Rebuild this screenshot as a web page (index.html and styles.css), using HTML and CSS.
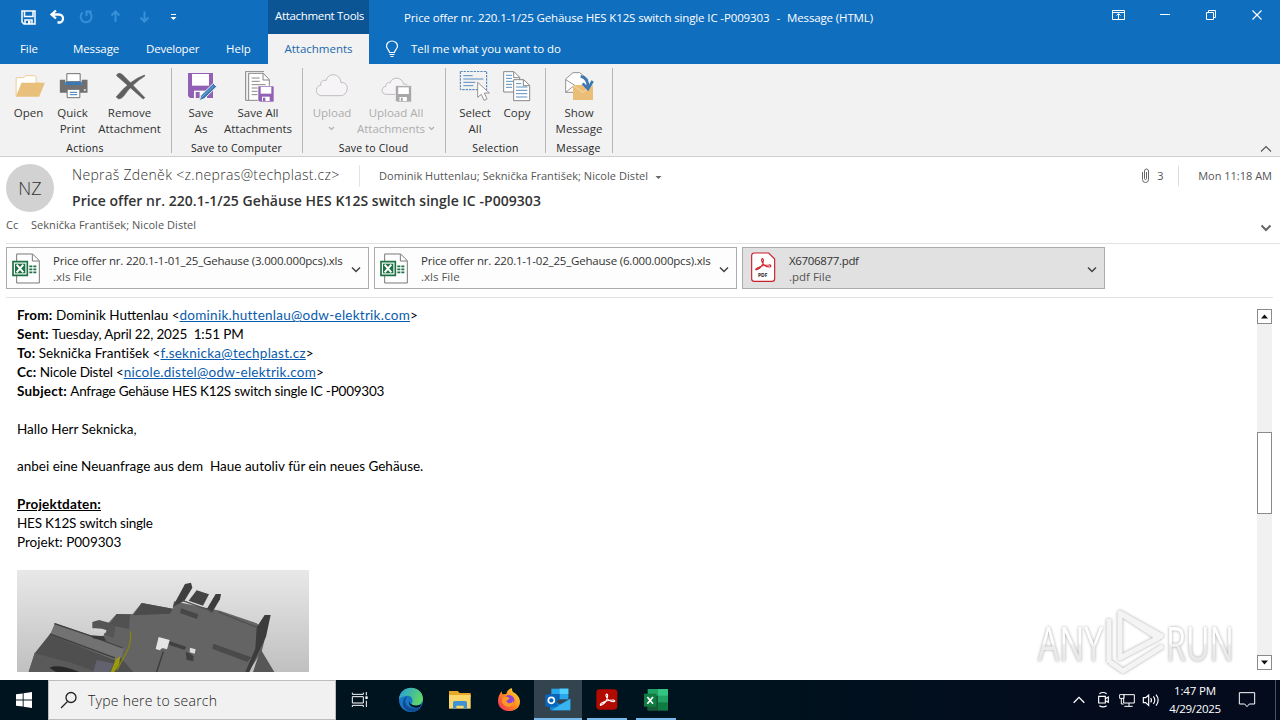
FILE: index.html
```html
<!DOCTYPE html>
<html lang="en">
<head>
<meta charset="utf-8">
<title>Price offer nr. 220.1-1/25 - Message (HTML)</title>
<link rel="stylesheet" href="styles.css">
</head>
<body>
<header class="titlebar">
  <div class="left-head">
    <div class="qat">
      <svg viewBox="0 0 29 34"><path d="M8 11h13v13h-11l-2-2z M10.500 11v5.500h8.500v-5.500 M11 24v-4h7v4" fill="none" stroke="#fff" stroke-width="1.500"/><path d="M14 21h2.500v3h-2.500z" fill="#fff"/></svg>
      <svg viewBox="0 0 29 34"><path d="M13 10.500l-4.500 4 4.500 4M9 14.500h7a4 4 0 0 1 0 8h-1.500" fill="none" stroke="#fff" stroke-width="2.300"/></svg>
      <svg viewBox="0 0 29 34"><path d="M10.500 12.500a5.500 5.500 0 1 0 6.500-.5M14.500 16v-4.500h5" fill="none" stroke="#3590d8" stroke-width="2"/></svg>
      <svg viewBox="0 0 29 34"><path d="M14.500 22v-10M10.500 15.500l4-4 4 4" fill="none" stroke="#3590d8" stroke-width="2"/></svg>
      <svg viewBox="0 0 29 34"><path d="M14.500 11.500v10M10.500 17.500l4 4 4-4" fill="none" stroke="#3590d8" stroke-width="2"/></svg>
      <svg viewBox="0 0 29 34"><path d="M12 14.500h5" stroke="#fff"/><path d="M11.500 17h6l-3 3z" fill="#fff"/></svg>
    </div>
    <nav class="tabs"><span class="t-file">File</span><span class="t-message">Message</span><span class="t-dev">Developer</span><span class="t-help">Help</span></nav>
  </div>
  <div class="context">
    <div class="context-title">Attachment Tools</div>
    <div class="context-tab">Attachments</div>
  </div>
  <div class="right-head">
    <div class="title-row">
      <div class="title"><span>Price offer nr. 220.1-1/25 Gehäuse HES K12S switch single IC -P009303</span><span>-</span><span>Message (HTML)</span></div>
      <div class="winbtns">
        <svg viewBox="0 0 46 30"><path d="M16.500 10.500h12v9h-12zM16.500 12.500h12M22.500 19v-5M20.500 15.500l2-2 2 2" fill="none" stroke="#fff"/></svg>
        <svg viewBox="0 0 46 30"><path d="M18 14.500h10" stroke="#fff"/></svg>
        <svg viewBox="0 0 46 30"><path d="M18.500 12.500h7v7h-7zM20.500 12v-1.500h7v7h-1.500" fill="none" stroke="#fff"/></svg>
        <svg viewBox="0 0 46 30"><path d="M18.500 10.500l9 9M27.500 10.500l-9 9" stroke="#fff" stroke-width="1.200"/></svg>
      </div>
    </div>
    <div class="tell">
      <svg class="bulb" viewBox="0 0 14 18"><path d="M4.500 12.500c0-2.500-3-3.500-3-6.500a5.500 5 0 0 1 11 0c0 3-3 4-3 6.500zM4.500 14.500h5M5.500 16.500h3" fill="none" stroke="#fff" stroke-width="1.200"/></svg>
      <span>Tell me what you want to do</span>
    </div>
  </div>
</header>

<section class="ribbon">
  <div class="group g-actions">
    <div class="buttons">
      <div class="btn b-open"><svg viewBox="37.500 213 96 96"><path d="M47 288V233h22l7-6h27l4 4v18h10" fill="#fff" stroke="#e6b566" stroke-width="2"/><path d="M46 290l17-42h70l-17 42z" fill="#e9bf7c"/></svg><span>Open</span></div>
      <div class="btn b-quick"><svg viewBox="169.500 213 96 96"><path d="M199 221h40v24h-40z" fill="#fff" stroke="#707070" stroke-width="3"/><path d="M178 239h16v16h50v-16h17v39h-83z" fill="#707070"/><path d="M194 245h50v10h-50z" fill="#3c78b4"/><path d="M200 268h38v25h-38z" fill="#fff" stroke="#707070" stroke-width="3"/><path d="M208 277h22M208 284h22" stroke="#3c78b4" stroke-width="3"/><path d="M250 268h6v4h-6z" fill="#fff"/></svg><span>Quick<br>Print</span></div>
      <div class="btn b-remove"><svg viewBox="340.500 213 96 96"><path d="M349 224q6-8 17 0 32 32 67 69l-5 4q-38-34-75-66-6-3-4-7z" fill="#606060" stroke="#606060" stroke-width="2"/><path d="M432 225q-45 16-85 66l8 6q8-1 14-8 24-36 64-61z" fill="#606060" stroke="#606060" stroke-width="2"/></svg><span>Remove<br>Attachment</span></div>
    </div>
    <div class="gname">Actions</div>
  </div>
  <div class="group g-save">
    <div class="buttons">
      <div class="btn b-saveas"><svg viewBox="555 213 96 96"><path d="M564 219h75v75h-69l-6-6z" fill="#9261b5"/><path d="M576 222h51v35h-51z" fill="#fff"/><path d="M582 272h39v22h-39z" fill="#fff"/><path d="M587 276h12v18h-12z" fill="#9261b5"/><path d="M598 302l5-16 37-36 10 10-37 36z" fill="#3c78b4" stroke="#f2f2f2" stroke-width="3"/><path d="M605 292l36-34" stroke="#9fc3e3" stroke-width="2"/></svg><span>Save<br>As</span></div>
      <div class="btn b-saveall"><svg viewBox="726 213 96 96"><path d="M746 301h-9V214h55" fill="none" stroke="#707070" stroke-width="2.500"/><path d="M746 220h44l18 19v62h-62z" fill="#fff" stroke="#707070" stroke-width="2.500"/><path d="M789 221v19h18" fill="none" stroke="#707070" stroke-width="2.500"/><path d="M755 234h24M755 244h24M755 254h42M755 264h18M755 274h18M755 284h18" stroke="#707070" stroke-width="2.500"/><path d="M774 258h48v48h-43l-5-5z" fill="#9261b5" stroke="#f2f2f2" stroke-width="2"/><path d="M782 261h32v20h-32z" fill="#fff"/><path d="M786 290h23v13h-23z" fill="#fff"/><path d="M789 293h7v10h-7z" fill="#9261b5"/></svg><span>Save All<br>Attachments</span></div>
    </div>
    <div class="gname">Save to Computer</div>
  </div>
  <div class="group g-cloud disabled">
    <div class="buttons">
      <div class="btn b-upload"><svg viewBox="48 213 96 96"><path d="M65 287c-21-1-21-28-3-31-1-12 9-18 16-14 7-27 43-22 45 6 26-4 24 37 0 39z" fill="#f6f4f6" stroke="#c0bcc0" stroke-width="3"/></svg><span>Upload<br><svg class="caret" viewBox="0 0 7 5"><path d="M1 1l2.500 2.500L6 1" fill="none" stroke="#b0b0b0" stroke-width="1.200"/></svg></span></div>
      <div class="btn b-upall"><svg viewBox="241.500 213 96 96"><path d="M260 283c-17-1-16-22-1-24 0-9 7-13 12-10 8-22 37-18 41 3 12-1 16 7 15 18l-38 13z" fill="#f6f4f6" stroke="#c0bcc0" stroke-width="3"/><path d="M288 257h48v49h-43l-5-5z" fill="#a8a8a8" stroke="#f2f2f2" stroke-width="2"/><path d="M296 262h32v20h-32z" fill="#fff"/><path d="M300 291h22v12h-22z" fill="#fff"/><path d="M304 293h6v10h-6z" fill="#a8a8a8"/></svg><span>Upload All<br>Attachments <svg class="caret" viewBox="0 0 7 5"><path d="M1 1l2.500 2.500L6 1" fill="none" stroke="#b0b0b0" stroke-width="1.200"/></svg></span></div>
    </div>
    <div class="gname">Save to Cloud</div>
  </div>
  <div class="group g-select">
    <div class="buttons">
      <div class="btn b-select"><svg viewBox="477 213 96 96"><path d="M481 214h79v55h-79z" fill="none" stroke="#3c78b4" stroke-width="3" stroke-dasharray="7 3"/><path d="M490 227h28M490 237h60M490 247h36M490 257h30" stroke="#3c78b4" stroke-width="2.500"/><path d="M533 247v45l11-9 8 18 9-4-8-18h15z" fill="#fff" stroke="#808080" stroke-width="2.500"/></svg><span>Select<br>All</span></div>
      <div class="btn b-copy"><svg viewBox="603 213 96 96"><path d="M611 215h31l17 17v44h-48z" fill="#fff" stroke="#707070" stroke-width="2.500"/><path d="M618 226h18M618 235h18M618 244h22M618 253h18M618 262h18" stroke="#3c78b4" stroke-width="2.500"/><path d="M641 239h30l18 17v46h-48z" fill="#fff" stroke="#707070" stroke-width="2.500"/><path d="M670 240v17h18M641 216v17h17" fill="none" stroke="#707070" stroke-width="2.500"/><path d="M648 251h16M648 261h34M648 271h34M648 281h34M648 291h34" stroke="#3c78b4" stroke-width="2.500"/></svg><span>Copy</span></div>
    </div>
    <div class="gname">Selection</div>
  </div>
  <div class="group g-show">
    <div class="buttons">
      <div class="btn b-show"><svg viewBox="789 213 96 96"><path d="M797 277v-40l22-19h20l24 19v40z" fill="#fff" stroke="#808080" stroke-width="2.500"/><path d="M797 239l29 18M797 277l25-20" fill="none" stroke="#808080" stroke-width="2.500"/><path d="M819 255h60v45h-60z" fill="#ebbe78"/><path d="M819 256l30 21 30-21" fill="none" stroke="#f6dfba" stroke-width="2.500"/><path d="M842 229q22 4 22 34M848 250l16 17 14-24" fill="none" stroke="#3c78b4" stroke-width="8"/></svg><span>Show<br>Message</span></div>
    </div>
    <div class="gname">Message</div>
  </div>
  <svg class="collapse" viewBox="0 0 12 8"><path d="M1 6.500l5-5 5 5" fill="none" stroke="#555" stroke-width="1.100"/></svg>
</section>

<section class="msghead">
  <div class="avatar">NZ</div>
  <div class="lines">
    <div class="line1">
      <span class="sender">Nepraš Zdeněk &lt;z.nepras@techplast.cz&gt;</span>
      <span class="recips">Dominik Huttenlau; Seknička František; Nicole Distel</span>
      <svg class="tri" viewBox="0 0 7 5"><path d="M.5 1h6l-3 3z" fill="#666"/></svg>
      <span class="clipbox"><svg class="clip" viewBox="0 0 9 16"><path d="M1.500 4v7.500a3 3 0 0 0 6 0V3a2 2 0 0 0-4 0v7.500a1 1 0 0 0 2 0V4" fill="none" stroke="#666"/></svg>3</span>
      <span class="date">Mon 11:18 AM</span>
    </div>
    <div class="subject">Price offer nr. 220.1-1/25 Gehäuse HES K12S switch single IC -P009303</div>
  </div>
</section>
<div class="ccrow"><span class="cclabel">Cc</span><span class="ccnames">Seknička František; Nicole Distel</span><svg class="expand" viewBox="0 0 12 8"><path d="M1.500 1.500L6 6l4.500-4.500" fill="none" stroke="#666" stroke-width="2"/></svg></div>

<section class="attachments">
  <div class="att">
    <svg class="ficon" viewBox="32 290 88 96"><path d="M49 296h48l20 20v67H49z" fill="#fff" stroke="#777" stroke-width="3"/><path d="M96 297v20h20" fill="none" stroke="#777" stroke-width="3"/><path d="M38 319h43v41H38z" fill="#fff" stroke="#1e7145" stroke-width="5"/><path d="M44 325h31v29H44z" fill="#1e7145"/><path d="M49 328l20 23M69 328l-20 23" stroke="#fff" stroke-width="6"/><path d="M87 333h9M99 333h9M87 342h9M99 342h9M87 351h9M99 351h9" stroke="#1e7145" stroke-width="5"/></svg>
    <div class="fname"><b class="xls">Price offer nr. 220.1-1-01_25_Gehause (3.000.000pcs).xls</b><span>.xls File</span></div>
    <svg class="chev" viewBox="0 0 10 7"><path d="M1 1.500l4 4 4-4" fill="none" stroke="#444" stroke-width="1.500"/></svg>
  </div>
  <div class="att">
    <svg class="ficon" viewBox="32 290 88 96"><path d="M49 296h48l20 20v67H49z" fill="#fff" stroke="#777" stroke-width="3"/><path d="M96 297v20h20" fill="none" stroke="#777" stroke-width="3"/><path d="M38 319h43v41H38z" fill="#fff" stroke="#1e7145" stroke-width="5"/><path d="M44 325h31v29H44z" fill="#1e7145"/><path d="M49 328l20 23M69 328l-20 23" stroke="#fff" stroke-width="6"/><path d="M87 333h9M99 333h9M87 342h9M99 342h9M87 351h9M99 351h9" stroke="#1e7145" stroke-width="5"/></svg>
    <div class="fname"><b class="xls">Price offer nr. 220.1-1-02_25_Gehause (6.000.000pcs).xls</b><span>.xls File</span></div>
    <svg class="chev" viewBox="0 0 10 7"><path d="M1 1.500l4 4 4-4" fill="none" stroke="#444" stroke-width="1.500"/></svg>
  </div>
  <div class="att selected">
    <svg class="ficon" viewBox="50 37 88 96"><path d="M72 40h43l18 18v59a8 8 0 0 1-8 8H72a8 8 0 0 1-8-8V48a8 8 0 0 1 8-8z" fill="#fff" stroke="#c8202c" stroke-width="3.500"/><path d="M79 90c12-4 19-16 20-27 1-8-6-8-5 0 2 11 12 19 24 19 6-1 4-7-3-6-12 0-23 3-34 9-6 4-6 6-2 5z" fill="none" stroke="#d22630" stroke-width="3.500"/><text x="83" y="112" class="pdf">PDF</text></svg>
    <div class="fname"><b class="x67">X6706877.pdf</b><span>.pdf File</span></div>
    <svg class="chev" viewBox="0 0 10 7"><path d="M1 1.500l4 4 4-4" fill="none" stroke="#444" stroke-width="1.500"/></svg>
  </div>
</section>

<main class="body">
  <div class="mail">
    <p><b>From:</b> <span class="s-dom">Dominik Huttenlau &lt;</span><a class="mailto">dominik.huttenlau@odw-elektrik.com</a>&gt;</p>
    <p><b>Sent:</b> <span class="s-tue">Tuesday, April 22, 2025&nbsp; 1:51 PM</span></p>
    <p><b>To:</b> <span class="s-sek">Seknička František &lt;</span><a class="mailto">f.seknicka@techplast.cz</a>&gt;</p>
    <p><b>Cc:</b> <span class="s-nic">Nicole Distel &lt;</span><a class="mailto">nicole.distel@odw-elektrik.com</a>&gt;</p>
    <p><b>Subject:</b> <span class="s-anf">Anfrage Gehäuse HES K12S switch single IC -P009303</span></p>
    <p>&nbsp;</p>
    <p>Hallo Herr Seknicka,</p>
    <p>&nbsp;</p>
    <p class="s-anbei">anbei eine Neuanfrage aus dem&nbsp; Haue autoliv für ein neues Gehäuse.</p>
    <p>&nbsp;</p>
    <p><b class="under">Projektdaten:</b></p>
    <p class="s-hes">HES K12S switch single</p>
    <p class="s-proj">Projekt: P009303</p>
    <svg class="part" viewBox="51 30 876 306">
      <defs><linearGradient id="bg" x1="0" y1="0" x2="0" y2="1"><stop offset="0" stop-color="#e8e8e8"/><stop offset="1" stop-color="#c0c0c0"/></linearGradient></defs>
      <path d="M51 30h876v306H51z" fill="url(#bg)"/>
      <path d="M200 336L275 240 315 225 322 192 350 162 398 162 425 129 518 146 522 124 660 152 770 190 800 215 785 275 745 336z" fill="#646464"/>
      <path d="M86 336L104 280 150 222 360 290 400 336z" fill="#4f4f4f"/>
      <path d="M165 189L372 262 365 292 345 300 150 224z" fill="#727272"/>
      <path d="M315 200L392 210 388 270 310 240z" fill="#626262"/>
      <path d="M163 191l105 35 100 38M150 222l195 72" fill="none" stroke="#414141" stroke-width="4"/>
      <path d="M104 280l110 28 76 28H86z" fill="#5a5a5a"/>
      <path d="M148 323q30-12 90 13h-70z" fill="#292929"/>
      <path d="M290 300l50 10-10 26h-50z" fill="#62626e"/>
      <path d="M277 186l20-6 36 10 14 4-6 40-26-10 2-12-40-8z" fill="#555"/><path d="M284 205l22 1 14 5-4 9-32-6z" fill="#d4d4d4"/>
      <path d="M274 226l37 3 8 14-40-8z" fill="#3a3a3a"/>
      <path d="M328 194l22-32 40 2-3 44z" fill="#515151"/>
      <path d="M425 129l93 17-8 15-110 5z" fill="#4b4b4b"/>
      <path d="M518 140l37-68 18-4 4 15-24 40z" fill="#3f3f3f"/><path d="M566 122l24-31 37 12-18 34z" fill="#444"/><path d="M620 148l27-46h16l-3 16-24 40z" fill="#3d3d3d"/>
      <path d="M770 202l24-37h18l-14 65-50 106h-12l30-70z" fill="#3c3c3c"/>
      <path d="M782 268l41 68h-64z" fill="#575757"/>
      <path d="M655 156l116 46M548 122l90 32" stroke="#505050" stroke-width="4"/>
      <path d="M543 145l52 18-4 14-51-18z" fill="#474747"/>
      <path d="M640 251l114 41-12 14-105-40z" fill="#4a4a4a"/>
      <path d="M476 231l33 9-8 28-14-4-8 7-12-4z" fill="#e4e4e4"/><path d="M570 263l17 5-3 13-15-4z" fill="#dedede"/>
      <path d="M510 244l48 16-4 10-48-16zM557 276l12 4 12 9-1 15-20-5z" fill="#404040"/>
      <path d="M490 274l-20 62" stroke="#3a3a3a" stroke-width="4"/>
      <path d="M391 214q6 38-20 78l-20 38" fill="none" stroke="#858612" stroke-width="4"/><path d="M332 336l15-38 14-9-4 25-14 22z" fill="#9a9a10"/>
    </svg>
  </div>
  <div class="scroll">
    <div class="sbtn"><svg viewBox="0 0 7 5"><path d="M0 4.500h7L3.500 .5z" fill="#111"/></svg></div>
    <div class="track"><div class="thumb"></div></div>
    <div class="sbtn"><svg viewBox="0 0 7 5"><path d="M0 .5h7L3.500 4.500z" fill="#111"/></svg></div>
  </div>
  <svg class="watermark" viewBox="0 0 216 72">
    <defs><linearGradient id="wm" x1="0" y1="0" x2="0" y2="1"><stop offset=".5" stop-color="#fff"/><stop offset=".55" stop-color="#ededed"/><stop offset="1" stop-color="#e3e3e3"/></linearGradient></defs>
    <text x="8" y="57" textLength="65" lengthAdjust="spacingAndGlyphs" fill="url(#wm)">ANY</text>
    <text x="136" y="57" textLength="68" lengthAdjust="spacingAndGlyphs" fill="url(#wm)">RUN</text>
    <path d="M79 15v44M90 9v45l38-20z M90 9l43 24M80 58l13 9 40-25" fill="none" stroke="#f4f4f4" stroke-width="5" stroke-linejoin="round"/>
  </svg>
</main>

<footer class="taskbar">
  <div class="start"><svg viewBox="0 0 16 16"><path d="M0 2.300L6.700 1.400V7.500H0zM7.600 1.300L16 0v7.500H7.600zM0 8.500h6.700v6.100L0 13.700zM7.600 8.500H16V16l-8.400-1.300z" fill="#fff"/></svg></div>
  <div class="search"><svg viewBox="0 0 18 18"><circle cx="11" cy="6.500" r="5" fill="none" stroke="#222" stroke-width="1.300"/><path d="M7.500 10.500L1 17" stroke="#222" stroke-width="1.300"/></svg><span>Type here to search</span></div>
  <div class="app taskview"><svg viewBox="78 33 84 84"><path d="M97 53v5h33v-5M97 96v-5h33v5M97 65h33v19H97zM139 51v10M139 77v19" fill="none" stroke="#fff" stroke-width="3"/><path d="M136 64h7v8h-7z" fill="#fff"/></svg></div>
  <div class="app"><svg viewBox="231 33 84 84"><defs><linearGradient id="eg" x1="0" y1="0" x2="1" y2=".4"><stop offset="0" stop-color="#249be0"/><stop offset="1" stop-color="#5fd668"/></linearGradient></defs><circle cx="273" cy="75" r="36" fill="#1877c6"/><path d="M237 73c2-46 69-46 72-3 0 20-23 27-35 18 10-15-2-28-15-25-11 2-20 5-22 10z" fill="url(#eg)"/><path d="M262 64c-16 20 1 44 40 34-12 17-36 15-46 5-14-14-7-34 6-39z" fill="#114d94"/><path d="M272 68c-9 8-4 16 2 20 8 5 20 5 31-1l-5 9c-22 8-44-10-28-28z" fill="#00141f"/></svg></div>
  <div class="app"><svg viewBox="378 33 84 84"><path d="M387 48h26l6 6h33v13h-65z" fill="#e8a728"/><path d="M387 60h65v41h-65z" fill="#fbd66b"/><path d="M399 101V83q0-5 5-5h32q5 0 5 5v18h-10v-9h-22v9z" fill="#3f93d3"/></svg></div>
  <div class="app"><svg viewBox="525 33 84 84"><defs><linearGradient id="ff" x1="1" y1="0" x2="0" y2="1"><stop offset="0" stop-color="#ffe23a"/><stop offset=".5" stop-color="#ff8a1f"/><stop offset="1" stop-color="#ee2263"/></linearGradient></defs><path d="M534 78c0-12 5-21 11-29l2 9 12-1c2-10 8-15 16-18l3 11c14 7 22 18 22 30 0 38-66 38-66-2z" fill="url(#ff)"/><circle cx="567" cy="76" r="16" fill="#8c43d6"/><path d="M550 68c6-6 15-3 19 3l-10 6c4 12 20 9 20-2 8 26-32 28-33 1z" fill="#ff9925"/></svg></div>
  <div class="app open active"><svg viewBox="672 33 84 84"><path d="M694 41h51v32h-51z" fill="#28a8ea"/><path d="M719 41h26v16h-26z" fill="#50d0ff"/><path d="M694 57h25v16h-25z" fill="#0a5fad"/><path d="M690 71l30 17 31-17v35h-61z" fill="#1581d4"/><path d="M751 71v35h-57z" fill="#38b5f0"/><path d="M676 58h36v37h-36z" fill="#0a65bd"/><circle cx="694" cy="76" r="9" fill="none" stroke="#fff" stroke-width="5"/></svg></div>
  <div class="app open short"><svg viewBox="819 33 84 84"><rect x="829" y="43" width="63" height="61" rx="10" fill="#b30b00"/><path d="M843 91c12-5 19-18 20-29 0-6-6-6-5 0 2 10 11 18 23 18 5 0 4-5-2-5-12 0-24 3-34 9-5 3-5 8-2 7z" fill="none" stroke="#fff" stroke-width="3.500"/></svg></div>
  <div class="app open short"><svg viewBox="966 33 84 84"><path d="M983 42h61v64h-61z" fill="#21a366"/><path d="M1014 42h30v20h-30z" fill="#33c481"/><path d="M983 62h31v44h-31z" fill="#185c37"/><path d="M1014 82h30v24h-30z" fill="#107c41"/><path d="M972 56h37v39h-37z" fill="#107c41"/><path d="M982 66l17 20M999 66l-17 20" stroke="#fff" stroke-width="5"/></svg></div>
  <div class="tray">
    <svg viewBox="141 264 72 72"><path d="M161 308l16-16 16 16" fill="none" stroke="#fff" stroke-width="4"/></svg>
    <svg viewBox="213 264 72 72"><path d="M236 289h20v20h-20zM256 296l9-5v16l-9-5M238 281q11-7 22 0M238 317q11 7 22 0" fill="none" stroke="#fff" stroke-width="3.500"/></svg>
    <svg viewBox="285 264 72 72"><path d="M311 284h32v25h-32zM327 309v10M313 319h25M299 284h13v11h-13zM304 295v17h7" fill="none" stroke="#fff" stroke-width="3"/><path d="M301 286h9v7h-9z" fill="#030c1c"/></svg>
    <svg viewBox="357 264 72 72"><path d="M370 293h7l9-8v31l-9-8h-7zM392 294q5 6 0 13M400 289q9 11 0 23M408 284q13 16 0 33" fill="none" stroke="#fff" stroke-width="3.500"/></svg>
    <div class="clock"><span>1:47 PM</span><span class="day">4/29/2025</span></div>
    <svg class="notif" viewBox="645 264 72 72"><path d="M658 278h46v34h-16l-7 8-7-8h-16z" fill="none" stroke="#fff" stroke-width="3"/></svg>
    <i class="peek"></i>
  </div>
</footer>
</body>
</html>
```
FILE: styles.css
```css
* { box-sizing: border-box; }
body { margin: 0; width: 1280px; height: 720px; overflow: hidden; display: flex; flex-direction: column; background: #fff; font-family: "Open Sans", "Noto Sans", sans-serif; font-size: 11.5px; color: #444; white-space: nowrap; }
svg { display: block; flex: none; }

.titlebar { height: 64px; flex: none; display: flex; background: #106ebe; color: #fff; }
.left-head { width: 268px; }
.qat { display: flex; height: 34px; padding-left: 14px; }
.qat svg { width: 29px; height: 34px; }
.tabs { display: flex; height: 30px; line-height: 29px; padding-left: 20px; }
.t-file { width: 53px; letter-spacing: -.1px; }
.t-message { width: 73px; letter-spacing: -.1px; }
.t-dev { width: 80px; letter-spacing: -.2px; }
.context { width: 101px; text-align: center; }
.context-title { height: 34px; line-height: 32px; background: #0b5595; letter-spacing: -.33px; padding-left: 2px; }
.context-tab { height: 30px; line-height: 29px; background: #f2f2f2; color: #1b68ad; }
.right-head { flex: 1; }
.title-row { height: 34px; display: flex; justify-content: space-between; padding-left: 35px; }
.title { display: flex; gap: 7px; line-height: 35px; letter-spacing: -.13px; }
.winbtns { display: flex; }
.winbtns svg { width: 46px; height: 30px; }
.tell { height: 30px; display: flex; line-height: 29px; padding-left: 16px; letter-spacing: -.05px; }
.bulb { width: 14px; height: 18px; margin: 6px 12px 0 0; }

.ribbon { height: 93px; flex: none; display: flex; background: #f2f2f2; border-bottom: 1px solid #cfcfcf; color: #333; }
.group { position: relative; padding-top: 7px; }
.group::after { content: ""; position: absolute; right: 0; top: 4px; height: 85px; width: 1px; background: #b6b6b6; }
.buttons { display: flex; height: 69px; }
.btn { display: flex; flex-direction: column; align-items: center; text-align: center; line-height: 16px; }
.btn > svg { width: 32px; height: 32px; margin-bottom: 2px; }
.gname { text-align: center; line-height: 16px; font-size: 10.5px; letter-spacing: .22px; color: #222; }
.g-actions { width: 172px; padding-left: 7px; }
.g-actions .gname { padding-right: 9px; }
.g-save { width: 131px; padding-left: 9px; }
.g-save .gname { padding-right: 11px; }
.g-cloud { width: 143px; padding-left: 6px; }
.g-cloud .gname { padding-right: 8px; }
.g-select { width: 100px; padding-left: 9px; }
.g-select .gname { padding-right: 10px; }
.g-show { width: 67px; padding-left: 8px; }
.g-show .gname { padding-right: 10px; }
.b-open { width: 43px; } .b-quick { width: 45px; } .b-remove { width: 69px; }
.b-saveas { width: 40px; } .b-saveall { width: 74px; }
.b-upload { width: 46px; } .b-upall { width: 82px; }
.b-select { width: 40px; } .b-copy { width: 40px; margin-left: 2px; }
.b-show { width: 50px; }
.disabled .btn { color: #adadad; }
.caret { display: inline-block; width: 7px; height: 5px; vertical-align: 2px; }
.collapse { width: 12px; height: 8px; margin: 81px 8px 0 auto; }

.msghead { height: 60px; flex: none; display: flex; padding: 7px 8px 0 6px; }
.avatar { width: 48px; height: 48px; border-radius: 50%; background: #d2d2d2; text-align: center; font-weight: 300; font-size: 18px; line-height: 48px; color: #333; }
.lines { flex: 1; padding-left: 18px; }
.line1 { display: flex; height: 23px; line-height: 22px; font-size: 11px; color: #555; align-items: center; }
.sender { width: 288px; height: 22px; font-size: 14px; font-weight: 300; letter-spacing: .33px; line-height: 20px; color: #333; border-right: 1px solid #e4e4e4; }
.recips { margin-left: 19px; letter-spacing: .05px; line-height: 24px; }
.tri { width: 7px; height: 5px; margin: 3px 0 0 7px; }
.clipbox { display: flex; align-items: center; margin-left: auto; width: 38px; height: 20px; border-right: 1px solid #dcdcdc; }
.clip { width: 9px; height: 16px; margin-right: 7px; }
.date { margin-left: 19px; line-height: 24px; }
.subject { font-size: 14px; font-weight: 600; letter-spacing: .04px; line-height: 28px; color: #333; }
.ccrow { height: 27px; flex: none; display: flex; font-size: 11px; line-height: 16px; margin-left: 6px; border-bottom: 1px solid #e2e2e2; color: #555; }
.cclabel { width: 25px; }
.ccnames { letter-spacing: .04px; }
.expand { width: 12px; height: 8px; margin: 7px 8px 0 auto; }

.attachments { height: 54px; flex: none; display: flex; gap: 5px; padding-top: 3px; margin: 0 7px 0 6px; border-bottom: 1px solid #e2e2e2; }
.att { width: 363px; height: 42px; display: flex; border: 1px solid #ababab; background: #fdfdfd; }
.selected { background: #e1e1e1; }
.ficon { width: 29.330px; height: 32px; margin: 4px 0 0 4px; }
.pdf { font: bold 15px "Open Sans", sans-serif; fill: #222; }
.fname { margin-left: 12.670px; padding-top: 5px; line-height: 16px; flex: 1; }
.fname b { display: block; font-weight: 400; color: #333; }
.fname span { color: #555; }
.xls { letter-spacing: -.19px; }
.x67 { letter-spacing: -.33px; }
.chev { width: 10px; height: 7px; margin: 18px 7px 0 0; }

.body { flex: 1; display: flex; position: relative; min-height: 0; }
.mail { flex: 1; height: 374px; overflow: hidden; padding: 8px 0 0 17px; font: 13.5px/18.920px Lato, sans-serif; color: #000; }
.mail p { margin: 0; }
.mail b { letter-spacing: .2px; }
.mailto { color: #0a5cad; text-decoration: underline; letter-spacing: .26px; }
.under { text-decoration: underline; }
.s-tue { letter-spacing: -.16px; }
.s-sek { letter-spacing: .05px; }
.s-nic { letter-spacing: -.2px; }
.s-anf { letter-spacing: -.23px; }
.s-hes { letter-spacing: -.2px; }
.part { width: 292px; height: 102px; margin-top: 18px; }
.scroll { width: 15px; height: 361px; margin: 11px 8px 0 0; display: flex; flex-direction: column; background: #f1f1f1; }
.sbtn { height: 15px; flex: none; border: 1px solid #8a8a8a; background: #fff; display: flex; align-items: center; justify-content: center; }
.sbtn svg { width: 7px; height: 5px; }
.track { flex: 1; padding-top: 108px; }
.thumb { height: 82px; border: 1px solid #8a8a8a; background: #fff; }
.watermark { position: absolute; left: 1030px; top: 306px; width: 216px; height: 72px; overflow: visible; filter: drop-shadow(0 0 1.500px rgba(0, 0, 0, .35)); }
.watermark text { font: 48px "Open Sans", sans-serif; }

.taskbar { height: 40px; flex: none; display: flex; background: linear-gradient(90deg, #00141f, #00141f 55%, #030b1c 85%); }
.start { width: 48px; padding: 12px 0 0 16px; }
.start svg { width: 16px; height: 16px; }
.search { width: 288px; display: flex; background: #f1f1f1; border: 1px solid #bdbdbd; padding-left: 11px; font-size: 14px; font-weight: 300; letter-spacing: .24px; line-height: 39px; color: #222; }
.search svg { width: 18px; height: 18px; margin: 10px 10px 0 0; }
.app { width: 48px; height: 40px; margin-right: 1px; padding: 6px 10px 0; position: relative; }
.app svg { width: 28px; height: 28px; }
.taskview { margin-right: 3px; }
.active { background: #33444e; }
.open::after { content: ""; position: absolute; left: 0; right: 0; bottom: 0; height: 2px; background: #76b9ed; }
.short::after { left: 4px; right: 4px; }
.tray { margin-left: auto; display: flex; align-items: center; color: #fff; }
.tray svg { width: 24px; height: 24px; }
.clock { width: 64px; display: flex; flex-direction: column; align-items: center; line-height: 18px; letter-spacing: -.17px; }
.day { letter-spacing: -.31px; }
.tray .notif { margin: 0 16px 0 8px; }
.peek { width: 1px; height: 40px; background: #4c5360; margin-right: 4px; }
```
